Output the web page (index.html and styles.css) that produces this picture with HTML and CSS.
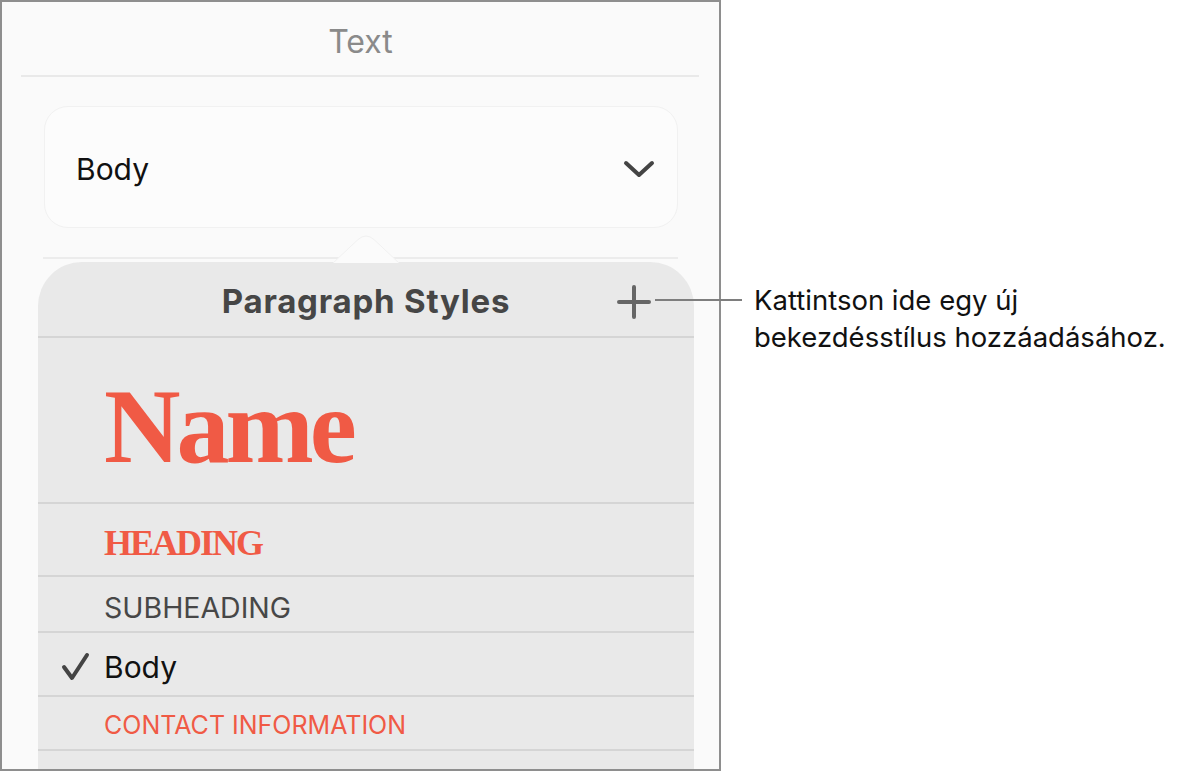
FILE: index.html
```html
<!DOCTYPE html>
<html>
<head>
<meta charset="utf-8">
<link rel="stylesheet" href="styles.css">
</head>
<body>
<div class="page">
  <div class="frame">
    <div class="title">Text</div>
    <div class="rule rule-top"></div>
    <div class="card">
      <span class="card-label">Body</span>
      <svg class="chevron" width="32" height="20" viewBox="0 0 32 20"><polyline points="3,4 16,16 29,4" fill="none" stroke="#444" stroke-width="4" stroke-linecap="round" stroke-linejoin="round"/></svg>
    </div>
    <div class="rule rule-mid"></div>
    <div class="popover">
      <svg class="caret" width="68" height="29" viewBox="0 0 68 29"><path d="M1 29 L26 5.5 Q34 -1.5 42 5.5 L67 29" fill="#fbfbfb" stroke="#f1f1f1" stroke-width="1"/></svg>
      <div class="pop-head">
        <span class="pop-title">Paragraph Styles</span>
        <svg class="plus" width="36" height="36" viewBox="0 0 36 36"><path d="M3 18 H33 M18 3 V33" fill="none" stroke="#666" stroke-width="4" stroke-linecap="round"/></svg>
      </div>
      <div class="row row-name"><span class="name">Name</span></div>
      <div class="row row-heading"><span class="heading">HEADING</span></div>
      <div class="row row-sub"><span class="sub">SUBHEADING</span></div>
      <div class="row row-body">
        <svg class="check" width="32" height="30" viewBox="0 0 32 30"><polyline points="4,15 12,26 27,3" fill="none" stroke="#444" stroke-width="4" stroke-linecap="round" stroke-linejoin="round"/></svg>
        <span class="body-text">Body</span>
      </div>
      <div class="row row-contact"><span class="contact">CONTACT INFORMATION</span></div>
      <div class="row row-empty"></div>
    </div>
  </div>
  <div class="callout">Kattintson ide egy új<br>bekezdésstílus hozzáadásához.</div>
  <div class="callout-line"></div>
</div>
</body>
</html>
```

FILE: styles.css
```css
html, body {
  margin: 0;
  padding: 0;
  background: #ffffff;
}
body {
  font-family: Inter, "Noto Sans", sans-serif;
}
.page {
  position: relative;
  display: flex;
  align-items: flex-start;
  width: 1177px;
  height: 772px;
}
.frame {
  box-sizing: border-box;
  width: 721px;
  height: 771px;
  border: 2px solid #8e8e8e;
  background: #fafafa;
  overflow: hidden;
  flex: none;
}
.title {
  box-sizing: border-box;
  height: 73px;
  padding-top: 22px;
  line-height: 36px;
  text-align: center;
  font-size: 32px;
  color: #8a8a8a;
}
.rule {
  height: 2px;
  background: #e9e9e9;
}
.rule-top {
  margin: 0 20px 0 19px;
}
.card {
  box-sizing: border-box;
  margin: 29px 0 0 42px;
  width: 634px;
  height: 122px;
  border-radius: 24px;
  background: #fcfcfc;
  border: 1px solid #f1f1f1;
  display: flex;
  align-items: center;
  justify-content: space-between;
  padding: 4px 22px 0 31px;
}
.card-label {
  font-size: 30px;
  color: #111;
}
.chevron {
  display: block;
}
.rule-mid {
  margin: 29px 0 0 41px;
  width: 635px;
  background: #ececec;
}
.popover {
  position: relative;
  margin: 3px 0 0 36px;
  width: 656px;
  background: #e9e9e9;
  border-radius: 44px 44px 0 0;
}
.caret {
  position: absolute;
  left: 294px;
  top: -28px;
  display: block;
}
.pop-head {
  box-sizing: border-box;
  height: 76px;
  border-bottom: 2px solid #d5d5d5;
  display: flex;
  align-items: center;
  justify-content: center;
  position: relative;
  padding-top: 4px;
}
.pop-title {
  font-size: 33px;
  font-weight: 700;
  letter-spacing: 0.8px;
  color: #464646;
}
.plus {
  position: absolute;
  right: 42px;
  top: 22px;
  display: block;
}
.row {
  box-sizing: border-box;
  border-bottom: 2px solid #d5d5d5;
  display: flex;
  align-items: center;
  padding-left: 66px;
  padding-top: 6px;
}
.row-name { height: 166px; padding-top: 14px; }
.row-heading { height: 73px; }
.row-sub { height: 56px; }
.row-body { height: 64px; padding-left: 22px; }
.row-contact { height: 54px; padding-top: 4px; }
.row-empty { height: 60px; border-bottom: none; }
.name {
  font-family: "Liberation Serif", serif;
  font-weight: bold;
  font-size: 106px;
  letter-spacing: -4px;
  color: #f05a45;
  line-height: 1;
}
.heading {
  font-family: "Liberation Serif", serif;
  font-weight: bold;
  font-size: 36px;
  letter-spacing: -2px;
  color: #f05a45;
}
.sub {
  font-size: 28.5px;
  color: #474747;
}
.check {
  display: block;
  margin-right: 12px;
}
.body-text {
  font-size: 30px;
  color: #111;
}
.contact {
  font-size: 25px;
  color: #f05a45;
}
.callout {
  margin: 282px 0 0 33px;
  font-size: 27.5px;
  line-height: 37px;
  color: #111;
  white-space: nowrap;
}
.callout-line {
  position: absolute;
  left: 655px;
  top: 299px;
  width: 87px;
  height: 2px;
  background: #7e7e7e;
}
```
